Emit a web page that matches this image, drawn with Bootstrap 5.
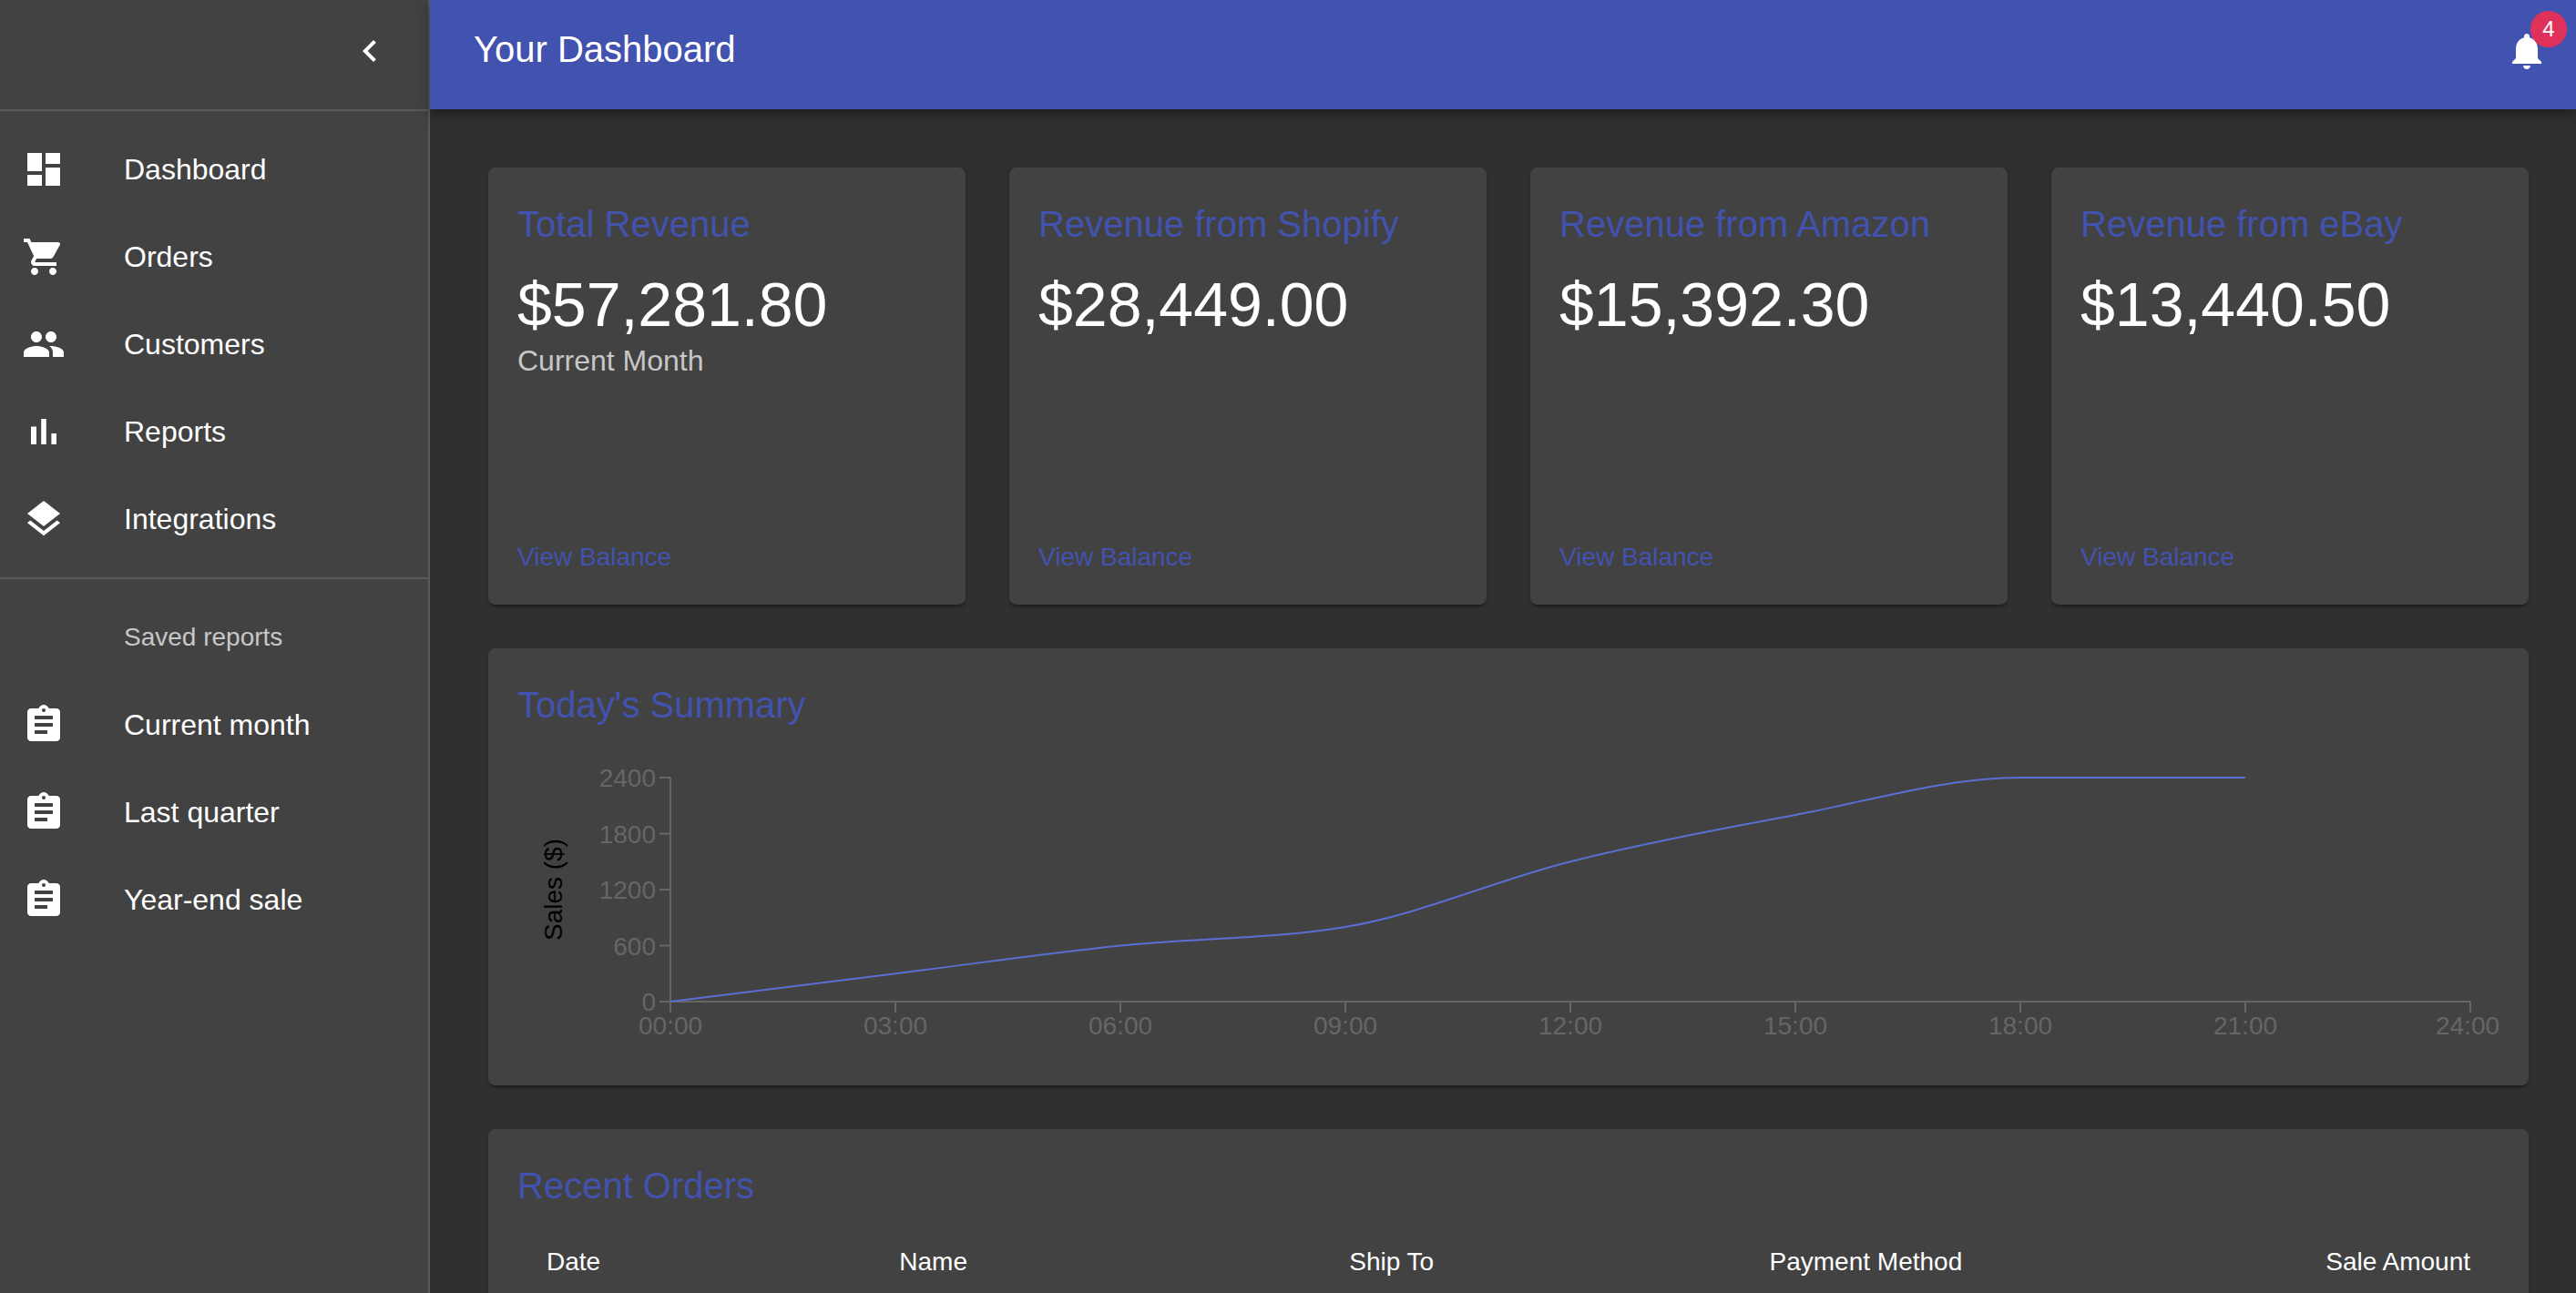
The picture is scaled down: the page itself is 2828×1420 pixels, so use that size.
<!DOCTYPE html>
<html lang="en">
<head>
<meta charset="utf-8">
<meta name="viewport" content="width=device-width, initial-scale=1">
<title>Your Dashboard</title>
<link rel="stylesheet" href="https://cdn.jsdelivr.net/npm/bootstrap@5.3.0/dist/css/bootstrap.min.css">
<style>
  :root {
    --page: #303030;
    --paper: #424242;
    --line: #595959;
    --brand: #4252af;
    --muted: #c7c7c7;
    --axis: #666666;
  }
  body {
    background: var(--page);
    color: #fff;
    font-family: "Liberation Sans", Arial, sans-serif;
    font-size: 32px;
    line-height: 48px;
  }
  .glyph { width: 48px; height: 48px; fill: currentColor; display: block; flex: none; }

  /* Sidebar */
  .sidebar { width: 472px; background: var(--paper); border-right: 2px solid var(--line); }
  .sidebar-top { height: 122px; padding: 0 16px 8px; border-bottom: 2px solid var(--line); }
  .icon-btn { padding: 24px; border: 0; background: none; color: #fff; border-radius: 50%; }
  .side-list { padding: 16px 0; }
  .side-list + .side-list { border-top: 2px solid var(--line); }
  .side-list .nav-link { padding: 24px; gap: 64px; color: #fff; }
  .side-caption { padding: 28px 24px 28px 136px; font-size: 28px; line-height: 40px; color: var(--muted); }

  /* Top bar */
  .topbar {
    height: 120px;
    padding: 0 6px 8px 48px;
    background: var(--brand);
    box-shadow: 0 4px 8px -2px rgba(0,0,0,.2), 0 8px 10px 0 rgba(0,0,0,.14), 0 2px 20px 0 rgba(0,0,0,.12);
    z-index: 2;
  }
  .page-title { font-size: 40px; line-height: 60px; font-weight: 400; margin: 0 0 4px; }
  .alert-count {
    top: -20px; right: -20px; width: 40px; height: 40px;
    background: #e0315a; font-size: 24px; line-height: 40px;
  }

  /* Content */
  .content { padding: 64px 52px 64px 64px; }
  .tiles { --bs-gutter-x: 48px; --bs-gutter-y: 48px; }
  .panel {
    background: var(--paper);
    border: 0;
    border-radius: 8px;
    color: #fff;
    min-height: 480px;
    box-shadow: 0 4px 2px -2px rgba(0,0,0,.2), 0 2px 2px 0 rgba(0,0,0,.14), 0 2px 6px 0 rgba(0,0,0,.12);
  }
  .panel .card-body { padding: 32px; }
  .panel-title { color: var(--brand); font-size: 40px; line-height: 60px; font-weight: 400; margin: 0 0 16px; }
  .amount { font-size: 68px; line-height: 84px; margin: 0; }
  .period { font-size: 32px; line-height: 40px; color: var(--muted); margin: 0; }
  .more { font-size: 28px; line-height: 40px; color: var(--brand); }

  .chart { min-height: 340px; }
  .chart svg { display: block; width: 100%; height: 340px; overflow: visible; font-size: 28px; }
  .chart line { stroke: var(--axis); stroke-width: 2; }
  .chart text { fill: var(--axis); }
  .chart .axis-name { fill: #000; }
  .chart path { fill: none; stroke: #5a6fd3; stroke-width: 2; }

  .orders { --bs-table-bg: transparent; --bs-table-color: #fff; table-layout: fixed; margin: 0; }
  .orders th {
    padding: 14px 32px; font-size: 28px; line-height: 48px; font-weight: 400;
    color: #fff; border-bottom: 2px solid #515151;
  }
  .c-date { width: 17.8%; }
  .c-name { width: 22.7%; }
  .c-ship { width: 21.2%; }
</style>
<script src="https://cdn.jsdelivr.net/npm/bootstrap@5.3.0/dist/js/bootstrap.bundle.min.js" defer></script>
</head>
<body class="d-flex vh-100 overflow-hidden">
<svg width="0" height="0" class="position-absolute" aria-hidden="true">
  <symbol id="i-report" viewBox="0 0 24 24"><path d="M19 3h-4.18C14.4 1.84 13.3 1 12 1c-1.3 0-2.4.84-2.82 2H5c-1.1 0-2 .9-2 2v14c0 1.1.9 2 2 2h14c1.1 0 2-.9 2-2V5c0-1.1-.9-2-2-2zm-7 0c.55 0 1 .45 1 1s-.45 1-1 1-1-.45-1-1 .45-1 1-1zm2 14H7v-2h7v2zm3-4H7v-2h10v2zm0-4H7V7h10v2z"/></symbol>
</svg>

<aside class="sidebar flex-shrink-0">
  <div class="sidebar-top d-flex align-items-center justify-content-end">
    <button type="button" class="icon-btn" aria-label="Close menu">
      <svg class="glyph" viewBox="0 0 24 24"><path d="M15.41 7.41L14 6l-6 6 6 6 1.41-1.41L10.83 12z"/></svg>
    </button>
  </div>
  <nav class="side-list nav flex-column" aria-label="Main">
    <a class="nav-link d-flex align-items-center" href="#"><svg class="glyph" viewBox="0 0 24 24"><path d="M3 13h8V3H3v10zm0 8h8v-6H3v6zm10 0h8V11h-8v10zm0-18v6h8V3h-8z"/></svg>Dashboard</a>
    <a class="nav-link d-flex align-items-center" href="#"><svg class="glyph" viewBox="0 0 24 24"><path d="M7 18c-1.1 0-1.99.9-1.99 2S5.9 22 7 22s2-.9 2-2-.9-2-2-2zM1 2v2h2l3.6 7.59-1.35 2.45c-.16.28-.25.61-.25.96 0 1.1.9 2 2 2h12v-2H7.42c-.14 0-.25-.11-.25-.25l.03-.12.9-1.63h7.45c.75 0 1.41-.41 1.75-1.03l3.58-6.49c.08-.14.12-.31.12-.48 0-.55-.45-1-1-1H5.21l-.94-2H1zm16 16c-1.1 0-1.99.9-1.99 2s.89 2 1.99 2 2-.9 2-2-.9-2-2-2z"/></svg>Orders</a>
    <a class="nav-link d-flex align-items-center" href="#"><svg class="glyph" viewBox="0 0 24 24"><path d="M16 11c1.66 0 2.99-1.34 2.99-3S17.66 5 16 5c-1.66 0-3 1.34-3 3s1.34 3 3 3zm-8 0c1.66 0 2.99-1.34 2.99-3S9.66 5 8 5C6.34 5 5 6.34 5 8s1.34 3 3 3zm0 2c-2.33 0-7 1.17-7 3.5V19h14v-2.5c0-2.33-4.67-3.5-7-3.5zm8 0c-.29 0-.62.02-.97.05 1.16.84 1.97 1.97 1.97 3.45V19h6v-2.5c0-2.33-4.67-3.5-7-3.5z"/></svg>Customers</a>
    <a class="nav-link d-flex align-items-center" href="#"><svg class="glyph" viewBox="0 0 24 24"><path d="M5 9.2h3V19H5zM10.6 5h2.8v14h-2.8zm5.6 8H19v6h-2.8z"/></svg>Reports</a>
    <a class="nav-link d-flex align-items-center" href="#"><svg class="glyph" viewBox="0 0 24 24"><path d="M11.99 18.54l-7.37-5.73L3 14.07l9 7 9-7-1.63-1.27-7.38 5.74zM12 16l7.36-5.73L21 9l-9-7-9 7 1.63 1.27L12 16z"/></svg>Integrations</a>
  </nav>
  <nav class="side-list nav flex-column" aria-label="Saved reports">
    <div class="side-caption">Saved reports</div>
    <a class="nav-link d-flex align-items-center" href="#"><svg class="glyph"><use href="#i-report"/></svg>Current month</a>
    <a class="nav-link d-flex align-items-center" href="#"><svg class="glyph"><use href="#i-report"/></svg>Last quarter</a>
    <a class="nav-link d-flex align-items-center" href="#"><svg class="glyph"><use href="#i-report"/></svg>Year-end sale</a>
  </nav>
</aside>

<div class="d-flex flex-column flex-grow-1" style="min-width:0">
  <header class="topbar d-flex align-items-center justify-content-between flex-shrink-0 position-relative">
    <h1 class="page-title">Your Dashboard</h1>
    <button type="button" class="icon-btn" aria-label="Notifications">
      <span class="d-block position-relative">
        <svg class="glyph" viewBox="0 0 24 24"><path d="M12 22c1.1 0 2-.9 2-2h-4c0 1.1.89 2 2 2zm6-6v-5c0-3.07-1.64-5.64-4.5-6.32V4c0-.83-.67-1.5-1.5-1.5s-1.5.67-1.5 1.5v.68C7.63 5.36 6 7.92 6 11v5l-2 2v1h16v-1l-2-2z"/></svg>
        <span class="alert-count position-absolute rounded-circle text-center">4</span>
      </span>
    </button>
  </header>

  <main class="content flex-grow-1 overflow-hidden">
    <div class="row tiles">
      <div class="col-3">
        <section class="card panel"><div class="card-body d-flex flex-column">
          <h2 class="panel-title">Total Revenue</h2>
          <p class="amount">$57,281.80</p>
          <p class="period">Current Month</p>
          <a class="more mt-auto align-self-start text-decoration-none" href="#">View Balance</a>
        </div></section>
      </div>
      <div class="col-3">
        <section class="card panel"><div class="card-body d-flex flex-column">
          <h2 class="panel-title">Revenue from Shopify</h2>
          <p class="amount">$28,449.00</p>
          <a class="more mt-auto align-self-start text-decoration-none" href="#">View Balance</a>
        </div></section>
      </div>
      <div class="col-3">
        <section class="card panel"><div class="card-body d-flex flex-column">
          <h2 class="panel-title">Revenue from Amazon</h2>
          <p class="amount">$15,392.30</p>
          <a class="more mt-auto align-self-start text-decoration-none" href="#">View Balance</a>
        </div></section>
      </div>
      <div class="col-3">
        <section class="card panel"><div class="card-body d-flex flex-column">
          <h2 class="panel-title">Revenue from eBay</h2>
          <p class="amount">$13,440.50</p>
          <a class="more mt-auto align-self-start text-decoration-none" href="#">View Balance</a>
        </div></section>
      </div>
      <div class="col-12">
        <section class="card panel"><div class="card-body d-flex flex-column">
          <h2 class="panel-title">Today's Summary</h2>
          <div class="chart" id="chart"></div>
        </div></section>
      </div>
      <div class="col-12">
        <section class="card panel"><div class="card-body">
          <h2 class="panel-title">Recent Orders</h2>
          <table class="table orders">
            <thead>
              <tr>
                <th scope="col" class="c-date">Date</th>
                <th scope="col" class="c-name">Name</th>
                <th scope="col" class="c-ship">Ship To</th>
                <th scope="col">Payment Method</th>
                <th scope="col" class="text-end">Sale Amount</th>
              </tr>
            </thead>
          </table>
        </div></section>
      </div>
    </div>
  </main>
</div>

<script>
  // Sales by hour; the last slot has no value yet.
  const sales = [0, 300, 600, 800, 1500, 2000, 2400, 2400];
  const hours = ['00:00', '03:00', '06:00', '09:00', '12:00', '15:00', '18:00', '21:00', '24:00'];
  const box = document.getElementById('chart');

  function draw() {
    const w = box.clientWidth, left = 168, right = w - 32, top = 34, bottom = 280;
    const step = (right - left) / (hours.length - 1);
    const px = i => left + step * i;
    const py = v => bottom - (bottom - top) * v / 2400;
    let s = `<line x1="${left}" y1="${bottom}" x2="${right}" y2="${bottom}"/><line x1="${left}" y1="${top}" x2="${left}" y2="${bottom}"/>`;
    hours.forEach((h, i) => {
      const tx = Math.min(px(i), w - 35);
      s += `<line x1="${px(i)}" y1="${bottom}" x2="${px(i)}" y2="${bottom + 12}"/><text x="${tx}" y="${bottom + 36}" text-anchor="middle">${h}</text>`;
    });
    for (let v = 0; v <= 2400; v += 600) {
      s += `<line x1="${left - 12}" y1="${py(v)}" x2="${left}" y2="${py(v)}"/><text x="${left - 16}" y="${py(v) + 10}" text-anchor="end">${v}</text>`;
    }
    s += `<text class="axis-name" transform="translate(49 ${(top + bottom) / 2}) rotate(-90)" text-anchor="middle">Sales ($)</text>`;

    // Monotone cubic through the points
    const y = sales.map(py), d = y.slice(1).map((v, i) => v - y[i]), n = y.length;
    const t = y.map((_, i) => {
      if (i === 0 || i === n - 1) return 0;
      const a = d[i - 1], b = d[i];
      return (Math.sign(a) + Math.sign(b)) * Math.min(Math.abs(a), Math.abs(b), Math.abs(a + b) / 4);
    });
    t[0] = (3 * d[0] - t[1]) / 2;
    t[n - 1] = (3 * d[n - 2] - t[n - 2]) / 2;
    let p = `M${px(0)} ${y[0]}`;
    for (let i = 1; i < n; i++) {
      p += `C${px(i - 1) + step / 3} ${y[i - 1] + t[i - 1] / 3} ${px(i) - step / 3} ${y[i] - t[i] / 3} ${px(i)} ${y[i]}`;
    }
    box.innerHTML = `<svg role="img" aria-label="Sales today">${s}<path d="${p}"/></svg>`;
  }
  draw();
  addEventListener('resize', draw);
</script>
</body>
</html>
